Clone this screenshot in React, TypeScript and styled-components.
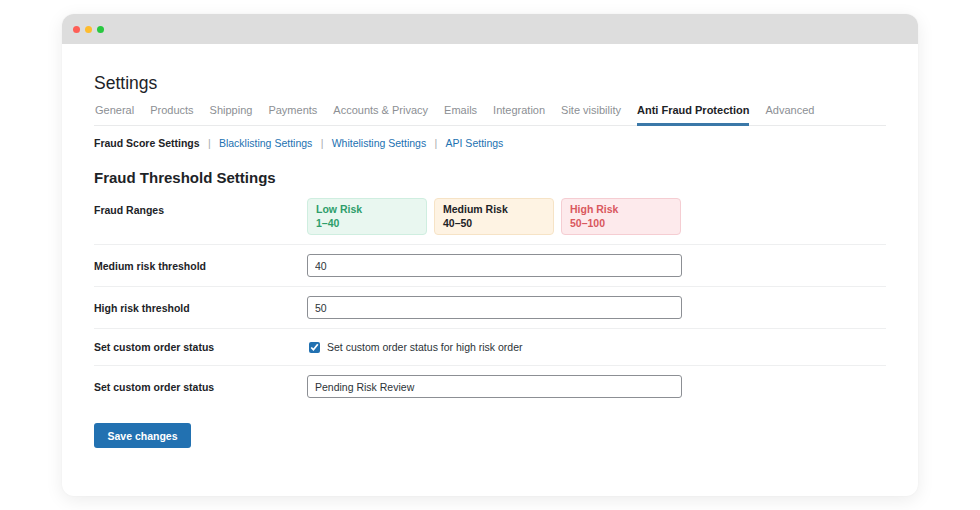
import React from 'react';
import styled, { createGlobalStyle } from 'styled-components';

const GlobalStyle = createGlobalStyle`
  html, body {
    margin: 0;
    padding: 0;
    background: #ffffff;
    font-family: "Liberation Sans", Arial, sans-serif;
    color: #1d2327;
  }
  * {
    box-sizing: border-box;
  }
`;

const Page = styled.div`
  padding: 14px 62px;
`;

const Window = styled.div`
  width: 856px;
  height: 482px;
  background: #ffffff;
  border-radius: 12px;
  overflow: hidden;
  box-shadow: 0 4px 18px rgba(0, 0, 0, 0.08), 0 0 2px rgba(0, 0, 0, 0.04);
  display: flex;
  flex-direction: column;
`;

const TitleBar = styled.div`
  height: 30px;
  background: #dddddd;
  display: flex;
  align-items: center;
  gap: 5px;
  padding-left: 11px;
`;

const Dot = styled.span<{ $color: string }>`
  width: 7px;
  height: 7px;
  border-radius: 50%;
  background: ${(p) => p.$color};
`;

const Content = styled.div`
  padding: 28px 32px 0;
`;

const Title = styled.h1`
  margin: 0;
  font-size: 17.5px;
  line-height: 22px;
  font-weight: 400;
  color: #1d2327;
`;

const Tabs = styled.nav`
  margin-top: 9px;
  display: flex;
  gap: 16px;
  border-bottom: 1px solid #e9eaeb;
  padding-left: 1px;
`;

const Tab = styled.a<{ $active?: boolean }>`
  font-size: 11px;
  line-height: 14px;
  padding-bottom: 6px;
  border-bottom: 3px solid ${(p) => (p.$active ? '#3b78a8' : 'transparent')};
  margin-bottom: -1px;
  color: ${(p) => (p.$active ? '#1d2327' : '#8c8f94')};
  font-weight: ${(p) => (p.$active ? 700 : 400)};
  text-decoration: none;
  white-space: nowrap;
`;

const SubNav = styled.div`
  margin-top: 10px;
  display: flex;
  align-items: center;
  gap: 8.3px;
  font-size: 10.5px;
  line-height: 14px;
`;

const SubCurrent = styled.span`
  font-weight: 700;
  color: #1d2327;
`;

const SubLink = styled.a`
  color: #2271b1;
  text-decoration: none;
`;

const Sep = styled.span`
  color: #a7aaad;
`;

const SectionTitle = styled.h2`
  margin: 19px 0 2px;
  font-size: 15px;
  line-height: 18px;
  font-weight: 700;
  color: #1d2327;
`;

const Row = styled.div<{ $last?: boolean; $top?: boolean }>`
  display: grid;
  grid-template-columns: 213px 375px;
  align-items: ${(p) => (p.$top ? 'start' : 'center')};
  padding: 9px 0;
  border-bottom: ${(p) => (p.$last ? 'none' : '1px solid #eeeff0')};
`;

const Label = styled.div<{ $offset?: number }>`
  font-size: 10.5px;
  line-height: 14px;
  font-weight: 700;
  color: #1d2327;
  padding-top: ${(p) => p.$offset ?? 0}px;
`;

const Ranges = styled.div`
  display: flex;
  gap: 7px;
`;

const RangeBox = styled.div<{ $bg: string; $border: string; $color: string }>`
  width: 120px;
  height: 37px;
  padding: 4px 8px;
  border-radius: 4px;
  background: ${(p) => p.$bg};
  border: 1px solid ${(p) => p.$border};
  color: ${(p) => p.$color};
  font-size: 10.5px;
  line-height: 13.5px;
  font-weight: 700;
`;

const Input = styled.input`
  width: 375px;
  height: 23px;
  border: 1px solid #8c8f94;
  border-radius: 3px;
  padding: 0 7px;
  font-family: "Liberation Sans", Arial, sans-serif;
  font-size: 10.5px;
  color: #2c3338;
  background: #ffffff;
  outline: none;
`;

const CheckLabel = styled.label`
  display: flex;
  align-items: center;
  height: 18px;
  gap: 7px;
  font-size: 10.5px;
  color: #2c3338;
  padding-left: 2px;
`;

const Check = styled.input`
  margin: 0;
  width: 11px;
  height: 11px;
  accent-color: #2271b1;
`;

const SaveButton = styled.button`
  margin-top: 16px;
  width: 97px;
  height: 25px;
  border: none;
  border-radius: 3px;
  background: #2271b1;
  color: #ffffff;
  font-family: "Liberation Sans", Arial, sans-serif;
  font-size: 10.5px;
  font-weight: 700;
  cursor: pointer;
`;

const tabs = [
  'General',
  'Products',
  'Shipping',
  'Payments',
  'Accounts & Privacy',
  'Emails',
  'Integration',
  'Site visibility',
  'Anti Fraud Protection',
  'Advanced',
];

const ranges = [
  { name: 'Low Risk', range: '1–40', bg: '#e9f7f0', border: '#cfeee0', color: '#2e9e6b' },
  { name: 'Medium Risk', range: '40–50', bg: '#fef3e3', border: '#f6e3c6', color: '#1d2327' },
  { name: 'High Risk', range: '50–100', bg: '#fdeaec', border: '#f5cdd2', color: '#d9585e' },
];

const App: React.FC = () => {
  return (
    <>
      <GlobalStyle />
      <Page>
        <Window>
          <TitleBar>
            <Dot $color="#fe5f57" />
            <Dot $color="#febc2e" />
            <Dot $color="#28c840" />
          </TitleBar>
          <Content>
            <Title>Settings</Title>
            <Tabs>
              {tabs.map((t) => (
                <Tab key={t} $active={t === 'Anti Fraud Protection'}>
                  {t}
                </Tab>
              ))}
            </Tabs>

            <SubNav>
              <SubCurrent>Fraud Score Settings</SubCurrent>
              <Sep>|</Sep>
              <SubLink href="#">Blacklisting Settings</SubLink>
              <Sep>|</Sep>
              <SubLink href="#">Whitelisting Settings</SubLink>
              <Sep>|</Sep>
              <SubLink href="#">API Settings</SubLink>
            </SubNav>

            <SectionTitle>Fraud Threshold Settings</SectionTitle>

            <Row $top>
              <Label $offset={5}>Fraud Ranges</Label>
              <Ranges>
                {ranges.map((r) => (
                  <RangeBox key={r.name} $bg={r.bg} $border={r.border} $color={r.color}>
                    <div>{r.name}</div>
                    <div>{r.range}</div>
                  </RangeBox>
                ))}
              </Ranges>
            </Row>

            <Row>
              <Label>Medium risk threshold</Label>
              <Input defaultValue="40" />
            </Row>

            <Row>
              <Label>High risk threshold</Label>
              <Input defaultValue="50" />
            </Row>

            <Row>
              <Label>Set custom order status</Label>
              <CheckLabel>
                <Check type="checkbox" defaultChecked />
                Set custom order status for high risk order
              </CheckLabel>
            </Row>

            <Row $last>
              <Label>Set custom order status</Label>
              <Input defaultValue="Pending Risk Review" />
            </Row>

            <SaveButton>Save changes</SaveButton>
          </Content>
        </Window>
      </Page>
    </>
  );
};

export default App;
